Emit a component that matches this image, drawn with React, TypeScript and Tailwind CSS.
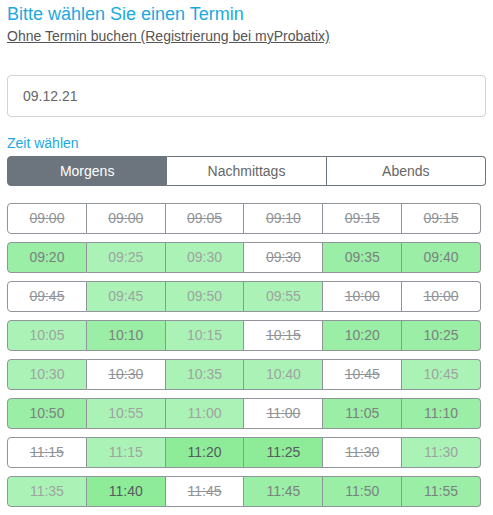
import React from "react";

type S = "x" | "L" | "M" | "D";
const rows: [string, S][][] = [
  [["09:00","x"],["09:00","x"],["09:05","x"],["09:10","x"],["09:15","x"],["09:15","x"]],
  [["09:20","M"],["09:25","L"],["09:30","L"],["09:30","x"],["09:35","M"],["09:40","M"]],
  [["09:45","x"],["09:45","L"],["09:50","L"],["09:55","L"],["10:00","x"],["10:00","x"]],
  [["10:05","L"],["10:10","M"],["10:15","L"],["10:15","x"],["10:20","M"],["10:25","M"]],
  [["10:30","L"],["10:30","x"],["10:35","L"],["10:40","L"],["10:45","x"],["10:45","L"]],
  [["10:50","M"],["10:55","L"],["11:00","L"],["11:00","x"],["11:05","M"],["11:10","M"]],
  [["11:15","x"],["11:15","L"],["11:20","D"],["11:25","D"],["11:30","x"],["11:30","L"]],
  [["11:35","L"],["11:40","D"],["11:45","x"],["11:45","M"],["11:50","M"],["11:55","M"]],
];

const cls: Record<S, string> = {
  x: "bg-white text-[#909498] line-through",
  L: "bg-[#abf2b6] text-[#9ea4a1]",
  M: "bg-[#9aeea6] text-[#7a827f]",
  D: "bg-[#8eeb97] text-[#555b5e]",
};

export default function App() {
  return (
    <div className="w-[493px] h-[515px] bg-white px-[7px] pt-[3px] font-['Liberation_Sans',Arial,sans-serif]">
      <h1 className="text-[18px] leading-[22px] text-[#1ba9e1]">Bitte wählen Sie einen Termin</h1>
      <a className="block mt-[3px] text-[14px] leading-[17px] text-[#555] underline">Ohne Termin buchen (Registrierung bei myProbatix)</a>
      <div className="mt-[30px] h-[42px] border border-[#ced4da] rounded-[4px] flex items-center pl-[15px] text-[14px] text-[#666]">09.12.21</div>
      <div className="mt-[18px] text-[14px] leading-[17px] text-[#1ba9e1]">Zeit wählen</div>
      <div className="mt-[4px] flex h-[30px] text-[14px]">
        <div className="flex-1 flex items-center justify-center bg-[#6c757d] text-white border border-[#6c757d] rounded-l-[4px]">Morgens</div>
        <div className="flex-1 flex items-center justify-center bg-white text-[#666] border border-[#6c757d] border-l-0">Nachmittags</div>
        <div className="flex-1 flex items-center justify-center bg-white text-[#666] border border-[#6c757d] border-l-0 rounded-r-[4px]">Abends</div>
      </div>
      <div className="mt-[17px] w-[474px] flex flex-col gap-[8px]">
        {rows.map((r, i) => (
          <div key={i} className="flex h-[31px] text-[14px]">
            {r.map(([t, s], j) => (
              <div
                key={j}
                className={`flex-1 flex items-center justify-center border-y border-r border-[#8f959a] ${j === 0 ? "border-l rounded-l-[4px]" : ""} ${j === 5 ? "rounded-r-[4px]" : ""} ${cls[s]}`}
              >
                {t}
              </div>
            ))}
          </div>
        ))}
      </div>
    </div>
  );
}
